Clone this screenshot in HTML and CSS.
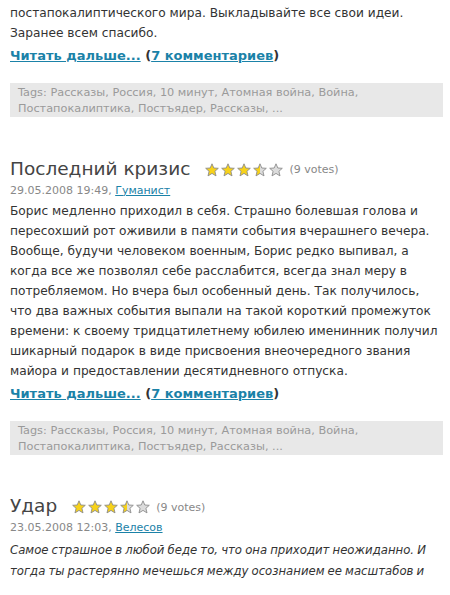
FILE: index.html
```html
<!DOCTYPE html>
<html lang="ru">
<head>
<meta charset="utf-8">
<link rel="stylesheet" href="styles.css">
</head>
<body>
<svg class="defs" width="0" height="0" aria-hidden="true">
  <defs>
    <linearGradient id="half" x1="0" x2="1" y1="0" y2="0">
      <stop offset="50%" stop-color="#f7d21a"/>
      <stop offset="50%" stop-color="#dcdcdc"/>
    </linearGradient>
    <symbol id="star" viewBox="0 0 14 14">
      <path d="M7 0.8 L8.8 5 L13.3 5.3 L9.9 8.3 L11 12.9 L7 10.4 L3 12.9 L4.1 8.3 L0.7 5.3 L5.2 5 Z" stroke="#8c8c8c" stroke-width="0.9" stroke-linejoin="round"/>
    </symbol>
  </defs>
</svg>
<div class="page">
  <div class="post">
    <p class="text">постапокалиптического мира. Выкладывайте все свои идеи.<br>Заранее всем спасибо.</p>
    <p class="more"><a href="#">Читать дальше...</a> (<a href="#">7 комментариев</a>)</p>
    <div class="tags">Tags: Рассказы, Россия, 10 минут, Атомная война, Война, Постапокалиптика, Постъядер, Рассказы, ...</div>
  </div>

  <div class="post">
    <div class="head">
      <h2 class="title">Последний кризис</h2>
      <span class="stars">
        <svg class="star full"><use href="#star"/></svg>
        <svg class="star full"><use href="#star"/></svg>
        <svg class="star full"><use href="#star"/></svg>
        <svg class="star halfs"><use href="#star"/></svg>
        <svg class="star empty"><use href="#star"/></svg>
      </span>
      <span class="votes">(9 votes)</span>
    </div>
    <div class="meta">29.05.2008 19:49, <a href="#">Гуманист</a></div>
    <p class="text">Борис медленно приходил в себя. Страшно болевшая голова и пересохший рот оживили в памяти события вчерашнего вечера. Вообще, будучи человеком военным, Борис редко выпивал, а когда все же позволял себе расслабится, всегда знал меру в потребляемом. Но вчера был особенный день. Так получилось, что два важных события выпали на такой короткий промежуток времени: к своему тридцатилетнему юбилею именинник получил шикарный подарок в виде присвоения внеочередного звания майора и предоставлении десятидневного отпуска.</p>
    <p class="more"><a href="#">Читать дальше...</a> (<a href="#">7 комментариев</a>)</p>
    <div class="tags">Tags: Рассказы, Россия, 10 минут, Атомная война, Война, Постапокалиптика, Постъядер, Рассказы, ...</div>
  </div>

  <div class="post">
    <div class="head">
      <h2 class="title">Удар</h2>
      <span class="stars">
        <svg class="star full"><use href="#star"/></svg>
        <svg class="star full"><use href="#star"/></svg>
        <svg class="star full"><use href="#star"/></svg>
        <svg class="star halfs"><use href="#star"/></svg>
        <svg class="star empty"><use href="#star"/></svg>
      </span>
      <span class="votes">(9 votes)</span>
    </div>
    <div class="meta">23.05.2008 12:03, <a href="#">Велесов</a></div>
    <p class="text italic">Самое страшное в любой беде то, что она приходит неожиданно. И тогда ты растерянно мечешься между осознанием ее масштабов и</p>
  </div>
</div>
</body>
</html>
```

FILE: styles.css
```css
html, body {
  margin: 0;
  padding: 0;
  background: #fff;
}
body {
  font-family: "DejaVu Sans", Verdana, sans-serif;
  color: #333;
  overflow: hidden;
  height: 595px;
}
.defs {
  position: absolute;
  width: 0;
  height: 0;
}
.page {
  padding: 3px 7px 0 10px;
}
.post {
  margin-bottom: 37.5px;
}
.text {
  margin: 0;
  font-size: 12.2px;
  line-height: 20px;
}
.italic {
  font-style: italic;
  font-size: 11.7px;
  word-spacing: -0.6px;
  line-height: 21px;
  margin-top: 4px;
}
.more {
  margin: 3px 0 0;
  font-size: 13px;
  font-weight: bold;
  line-height: 20px;
  color: #333;
}
.more a, .meta a {
  color: #1b82a8;
  text-decoration: underline;
}
.tags {
  margin-top: 17px;
  background: #e8e8e8;
  color: #9a9a9a;
  font-size: 11.3px;
  line-height: 16px;
  padding: 2px 8px 0 8px;
}
.head {
  display: flex;
  align-items: center;
  height: 28px;
}
.title {
  margin: 0;
  font-size: 18.5px;
  font-weight: normal;
  color: #444;
  line-height: 24px;
}
.stars {
  display: flex;
  gap: 2px;
  margin-left: 15px;
  padding-top: 2px;
}
.star {
  width: 14px;
  height: 14px;
}
.full { fill: #f7d21a; }
.halfs { fill: url(#half); }
.empty { fill: #dcdcdc; }
.votes {
  margin-left: 6px;
  font-size: 11px;
  color: #888;
  padding-top: 2px;
}
.meta {
  font-size: 11px;
  color: #888;
  line-height: 16px;
  margin-bottom: 2px;
}
```
